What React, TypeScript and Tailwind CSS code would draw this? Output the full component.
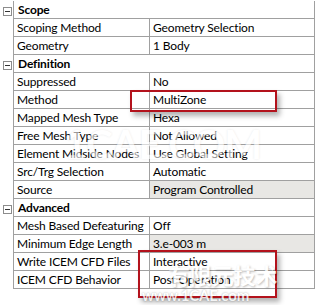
import React from 'react';

type Row =
  | { kind: 'group'; title: string }
  | { kind: 'prop'; label: string; value: string; shaded?: boolean };

const rows: Row[] = [
  { kind: 'group', title: 'Scope' },
  { kind: 'prop', label: 'Scoping Method', value: 'Geometry Selection' },
  { kind: 'prop', label: 'Geometry', value: '1 Body' },
  { kind: 'group', title: 'Definition' },
  { kind: 'prop', label: 'Suppressed', value: 'No' },
  { kind: 'prop', label: 'Method', value: 'MultiZone' },
  { kind: 'prop', label: 'Mapped Mesh Type', value: 'Hexa' },
  { kind: 'prop', label: 'Free Mesh Type', value: 'Not Allowed' },
  { kind: 'prop', label: 'Element Midside Nodes', value: 'Use Global Setting' },
  { kind: 'prop', label: 'Src/Trg Selection', value: 'Automatic' },
  { kind: 'prop', label: 'Source', value: 'Program Controlled', shaded: true },
  { kind: 'group', title: 'Advanced' },
  { kind: 'prop', label: 'Mesh Based Defeaturing', value: 'Off' },
  { kind: 'prop', label: 'Minimum Edge Length', value: '3.e-003 m', shaded: true },
  { kind: 'prop', label: 'Write ICEM CFD Files', value: 'Interactive' },
  { kind: 'prop', label: 'ICEM CFD Behavior', value: 'Post Operation' },
];

function CollapseBox() {
  return (
    <div className="ml-[3px] mt-[6px] flex h-[9px] w-[9px] items-center justify-center border border-[#8c8c8c] bg-white">
      <div className="h-px w-[5px] bg-[#333]" />
    </div>
  );
}

export default function App() {
  return (
    <div
      className="relative h-[305px] w-[315px] overflow-hidden bg-white text-[12px] leading-none tracking-[-0.15px] text-black"
      style={{ fontFamily: 'Lato, "Noto Sans", sans-serif' }}
    >
      <div className="pt-px">
        {rows.map((row, i) => (
          <div key={i} className="flex h-[18px]">
            <div className="w-[13px] shrink-0">{row.kind === 'group' && <CollapseBox />}</div>
            {row.kind === 'group' ? (
              <div className="flex flex-1 items-center border-x border-b border-[#a0a0a0] pl-[4px] font-bold">
                {row.title}
              </div>
            ) : (
              <div className="flex flex-1 border-x border-b border-[#a0a0a0]">
                <div className="flex w-[136px] shrink-0 items-center whitespace-nowrap border-r border-[#a0a0a0] pl-[3px]">
                  {row.label}
                </div>
                <div
                  className={`flex flex-1 items-center whitespace-nowrap pl-[3px] ${
                    row.shaded ? 'bg-[#e8e7e4]' : ''
                  }`}
                >
                  {row.value}
                </div>
              </div>
            )}
          </div>
        ))}
      </div>

      {/* watermark */}
      <div className="pointer-events-none absolute left-[64px] top-[124px] text-[40px] font-bold tracking-tight text-white opacity-60 [text-shadow:0_0_2px_rgba(0,0,0,0.15)]">
        1CAE.COM
      </div>

      {/* highlight boxes */}
      <div className="pointer-events-none absolute left-[130px] top-[90px] h-[22px] w-[147px] border-2 border-[#b3121c] shadow-[3px_4px_5px_rgba(0,0,0,0.3)]" />
      <div className="pointer-events-none absolute left-[138px] top-[250px] h-[48px] w-[139px] border-2 border-[#b3121c] shadow-[3px_4px_5px_rgba(0,0,0,0.3)]" />

      <div
        className="pointer-events-none absolute left-[168px] top-[263px] text-[22px] font-bold text-white opacity-80 [text-shadow:1px_1px_2px_rgba(0,0,0,0.3)]"
        style={{ fontFamily: '"Noto Sans CJK SC", sans-serif' }}
      >
        有限元技术
      </div>
      <div className="pointer-events-none absolute left-[142px] top-[288px] text-[15px] font-bold text-white opacity-80 [text-shadow:0_0_2px_rgba(0,0,0,0.4)]">
        www.1CAE.com
      </div>
    </div>
  );
}
